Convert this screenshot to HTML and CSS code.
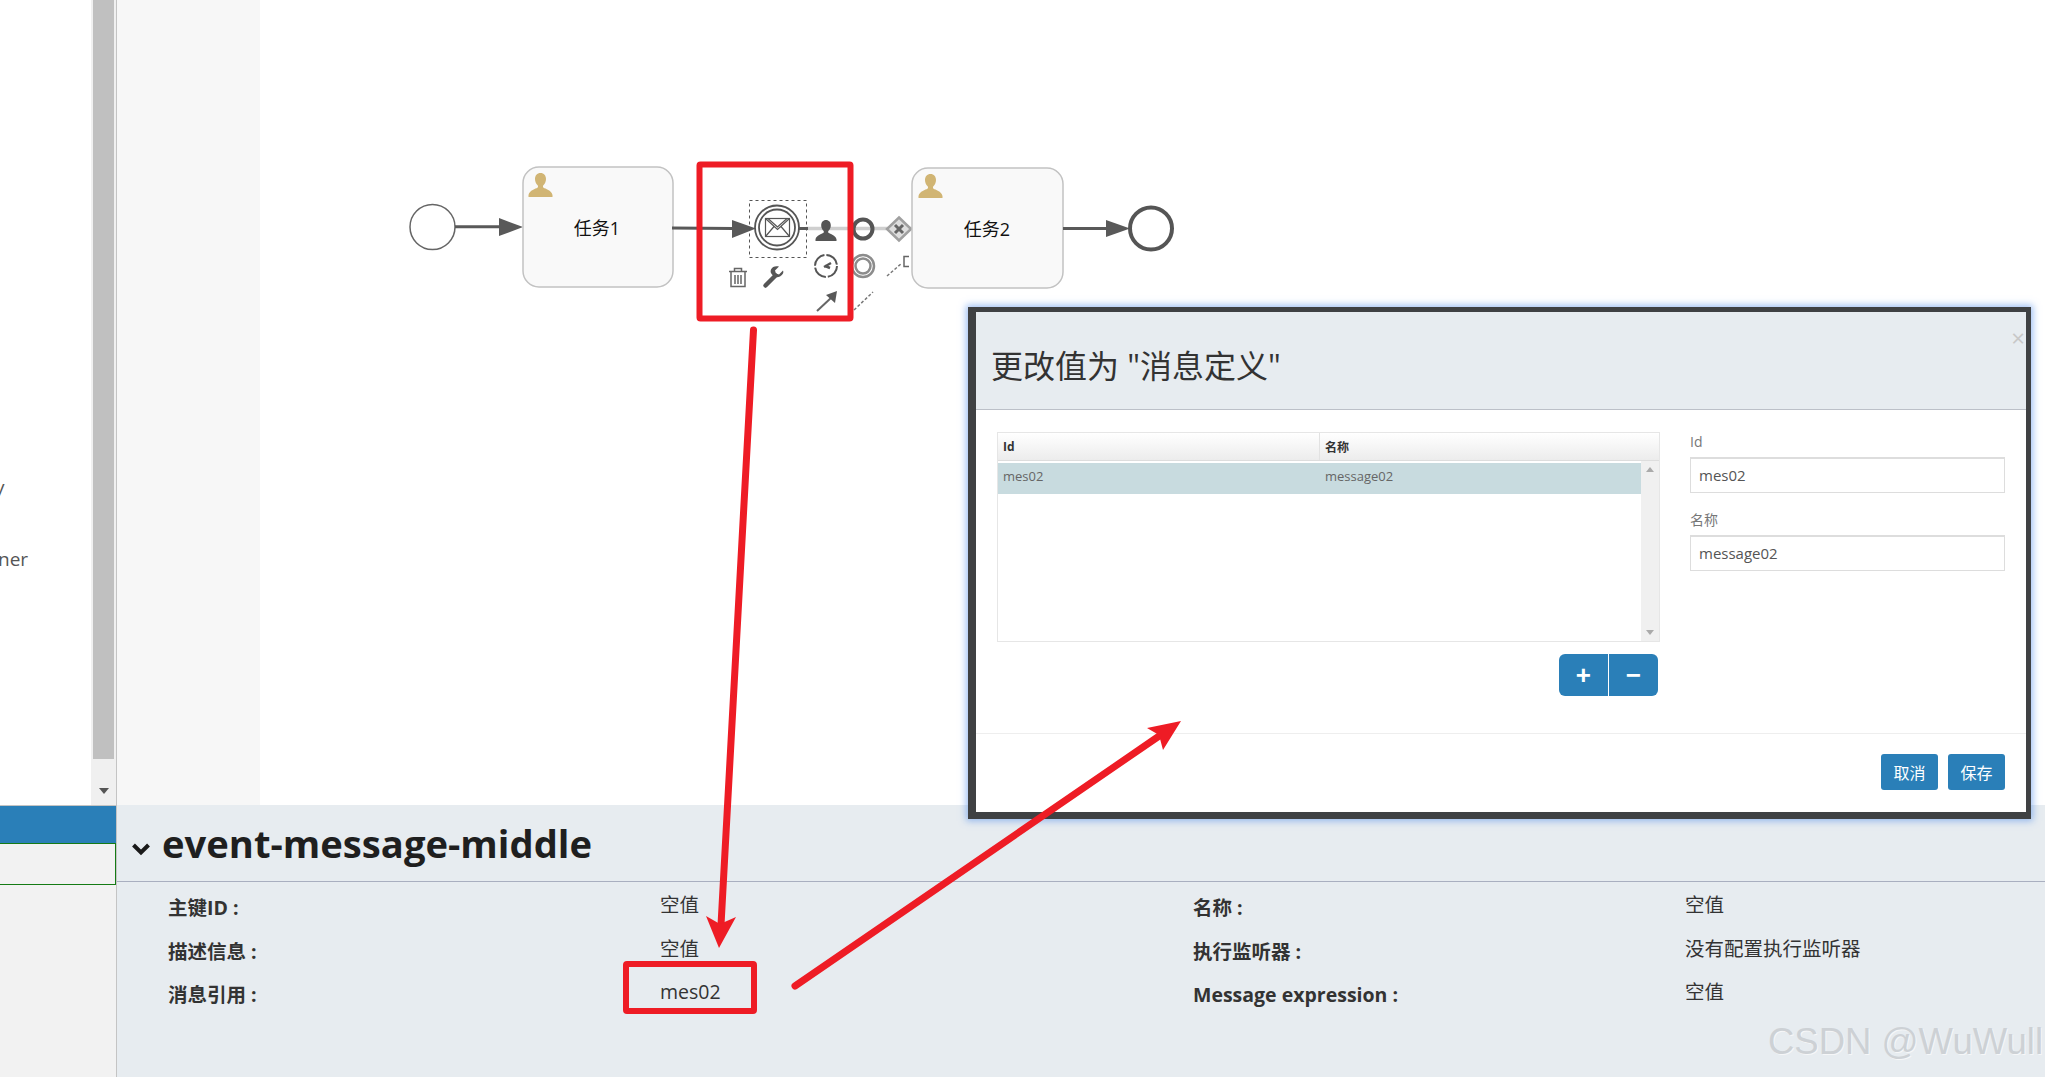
FILE: index.html
```html
<!DOCTYPE html>
<html lang="zh">
<head>
  <meta charset="UTF-8" />
  <title>event-message-middle</title>
  <link rel="stylesheet" href="styles.css">
</head>
<body>
  <aside class="sidebar">
    <div class="palette">
      <div class="palette-list">
        <div class="palette-item cut-y">y</div>
        <div class="palette-item cut-ner">ner</div>
      </div>
      <div class="scrollbar">
        <div class="thumb"></div>
        <div class="arrow-down"></div>
      </div>
    </div>
    <div class="side-blue"></div>
    <div class="side-green"></div>
  </aside>

  <main class="main">
    <div class="canvas">
      <div class="gutter"></div>
      <div class="paper">
        <svg class="diagram" width="1785" height="805" viewBox="260 0 1785 805">
          <defs>
            <symbol id="user" viewBox="0 0 24 24">
              <path d="M12 0c3.4 0 5.5 2.6 5.5 6 0 2.6-1 4.8-2.6 6.2-.6.6-.6 2 .2 2.6 1.6 1 7.9 2.4 8.9 7.2v2H0v-2c1-4.8 7.3-6.2 8.9-7.2.8-.6.8-2 .2-2.6C7.5 10.8 6.5 8.6 6.5 6 6.5 2.6 8.6 0 12 0z"/>
            </symbol>
          </defs>

          <!-- flow -->
          <line class="flow-faint" x1="806" y1="228.5" x2="913" y2="228.5"/>
          <circle class="start" cx="432.5" cy="227" r="22.5"/>
          <line class="flow" x1="455" y1="226.7" x2="500" y2="226.7"/>
          <polygon class="head" points="499,218 523,227 499,236"/>

          <rect class="task" x="523" y="167" width="150" height="120" rx="16"/>
          <use class="user-task" href="#user" x="528" y="173" width="25" height="24"/>
          <text class="task-text" x="597" y="235">任务1</text>

          <line class="flow" x1="672" y1="228" x2="733" y2="228.5"/>
          <polygon class="head" points="732,220 756,228.5 732,238"/>

          <!-- selected intermediate event -->
          <rect class="select" x="749.5" y="200.5" width="57" height="57"/>
          <line class="flow" x1="798" y1="228.5" x2="808" y2="228.5"/>
          <circle class="event" cx="777" cy="227.5" r="22"/>
          <circle class="event" cx="777" cy="227.5" r="18"/>
          <g class="mail">
            <rect x="765.5" y="218.5" width="24" height="18"/>
            <path d="M765.5 218.5l12 11 12-11M768 218.5l9.500 8.500 9.500-8.500M765.500 236.500l8.500-10M789.500 236.500l-8.500-10"/>
          </g>

          <!-- context pad -->
          <use class="pad-user" href="#user" x="815" y="220" width="22" height="21"/>
          <circle class="pad-ring" cx="863" cy="229" r="9.500"/>
          <polygon class="pad-gate" points="899,217.500 911,229 899,240.500 887,229"/>
          <path class="pad-x" d="M895 225l8 8M903 225l-8 8"/>
          <path class="pad-assoc" d="M887 276l15-13"/>
          <path class="pad-bracket" d="M909 256.500h-5v10h5"/>
          <circle class="pad-timer" cx="826" cy="266" r="11"/>
          <path class="pad-hand" d="M824 267l7-4M825 266l5 2"/>
          <circle class="pad-double" cx="863" cy="266" r="11"/>
          <circle class="pad-double" cx="863" cy="266" r="7.500"/>
          <g class="pad-trash">
            <path d="M729 271.500h18M734.500 271v-2.500h7v2.500M731 272v14.500h14v-14.500M735 275v9M738 275v9M741 275v9"/>
          </g>
          <path class="pad-wrench-shaft" d="M765.500 285.500l10-10"/>
          <path class="pad-wrench" d="M783 270.500l-4 4-3-1-1-3 4-4c-3-1-7 0-8 3-1 2 0 4 1 5l2 2c2 1 4 1 6 0 3-2 4-4 3-6z"/>
          <path class="pad-arrow" d="M817 311l15-14"/>
          <polygon class="head" points="837,291 835,303 826,295"/>
          <path class="pad-assoc" d="M854 310l19-18"/>

          <rect class="task" x="912" y="168" width="151" height="120" rx="16"/>
          <use class="user-task" href="#user" x="918" y="174" width="25" height="24"/>
          <text class="task-text" x="987" y="235.500">任务2</text>

          <line class="flow" x1="1063" y1="228.500" x2="1107" y2="228.500"/>
          <polygon class="head" points="1106,220 1130,228.500 1106,237"/>
          <circle class="end" cx="1151" cy="228.500" r="21"/>
        </svg>
      </div>
    </div>

    <section class="details">
      <header class="details-head">
        <svg class="chevron" width="18" height="14" viewBox="0 0 18 14"><path d="M1.500 3l7.500 7.500L16.500 3"/></svg>
        <h2 class="details-title">event-message-middle</h2>
      </header>
      <div class="props">
        <div class="prop-label">主键ID :</div><div class="prop-value">空值</div>
        <div class="prop-label">名称 :</div><div class="prop-value">空值</div>
        <div class="prop-label">描述信息 :</div><div class="prop-value">空值</div>
        <div class="prop-label">执行监听器 :</div><div class="prop-value">没有配置执行监听器</div>
        <div class="prop-label">消息引用 :</div><div class="prop-value">mes02</div>
        <div class="prop-label">Message expression :</div><div class="prop-value">空值</div>
      </div>
    </section>
  </main>

  <div class="modal">
    <div class="modal-head">
      <h3 class="modal-title">更改值为 "消息定义"</h3>
      <span class="modal-close">×</span>
    </div>
    <div class="modal-body">
      <div class="grid-col">
        <div class="grid">
          <div class="grid-head">
            <div class="cell-id">Id</div>
            <div class="cell-name">名称</div>
          </div>
          <div class="grid-rows">
            <div class="grid-list">
              <div class="grid-row">
                <div class="cell-id">mes02</div>
                <div class="cell-name">message02</div>
              </div>
            </div>
            <div class="grid-scroll">
              <div class="tri-up"></div>
              <div class="tri-down"></div>
            </div>
          </div>
        </div>
        <div class="btn-group">
          <button class="btn-add">+</button>
          <button class="btn-add">−</button>
        </div>
      </div>
      <div class="form">
        <label class="form-label">Id</label>
        <input class="form-input" type="text" value="mes02">
        <label class="form-label">名称</label>
        <input class="form-input" type="text" value="message02">
      </div>
    </div>
    <div class="modal-foot">
      <button class="btn">取消</button>
      <button class="btn">保存</button>
    </div>
  </div>

  <!-- red annotations drawn on top of the screenshot -->
  <svg class="notes" width="2045" height="1077" viewBox="0 0 2045 1077">
    <rect x="699.500" y="164.500" width="151" height="154" rx="1"/>
    <rect x="626" y="964" width="128" height="47" rx="1"/>
    <line x1="753.500" y1="330" x2="721" y2="925"/>
    <polygon points="719,948 706,916 720,924 736,917"/>
    <line x1="795" y1="986" x2="1165" y2="732"/>
    <polygon points="1181,721 1147,728 1159,735 1163,750"/>
  </svg>

  <div class="watermark">CSDN @WuWull</div>
</body>
</html>
```
FILE: styles.css
```css
html, body {
  margin: 0;
  padding: 0;
  height: 100%;
}
body {
  display: flex;
  position: relative;
  overflow: hidden;
  font-family: "Open Sans", "Noto Sans CJK SC", sans-serif;
  color: #333;
  background: #fff;
}

/* left palette */
.sidebar {
  width: 116px;
  flex: none;
  display: flex;
  flex-direction: column;
  border-right: 1px solid #c4c4c4;
  background: #f2f2f2;
}
.palette {
  height: 806px;
  flex: none;
  display: flex;
  background: #fff;
  border-bottom: 1px solid #c4c4c4;
  box-sizing: border-box;
}
.palette-list {
  flex: 1;
  overflow: hidden;
  padding-top: 473px;
  font-size: 19px;
  color: #555;
}
.palette-item {
  height: 28px;
  line-height: 28px;
}
.cut-y {
  margin-left: -5px;
  margin-bottom: 44px;
}
.cut-ner {
  margin-left: -2px;
}
.scrollbar {
  width: 25px;
  flex: none;
  display: flex;
  flex-direction: column;
  align-items: center;
  justify-content: space-between;
  background: #f0f0f0;
}
.thumb {
  width: 21px;
  height: 759px;
  background: #c0c0c0;
}
.arrow-down {
  border-left: 5px solid transparent;
  border-right: 5px solid transparent;
  border-top: 6px solid #555;
  margin-bottom: 11px;
}
.side-blue {
  height: 37px;
  background: #2a7fb8;
}
.side-green {
  height: 42px;
  box-sizing: border-box;
  background: #f2f2f2;
  border: 1px solid #157b15;
  border-left: none;
}

/* main column */
.main {
  flex: 1;
  min-width: 0;
  display: flex;
  flex-direction: column;
}
.canvas {
  height: 805px;
  flex: none;
  display: flex;
}
.gutter {
  width: 143px;
  flex: none;
  background: #f7f7f7;
}
.paper {
  flex: 1;
  background: #fff;
  min-width: 0;
}
.diagram {
  display: block;
}
.flow { stroke: #595959; stroke-width: 3; }
.flow-faint { stroke: #cfcfcf; stroke-width: 3.5; }
.head { fill: #595959; }
.start { fill: #fff; stroke: #666; stroke-width: 1.5; }
.end { fill: #fff; stroke: #555; stroke-width: 4; }
.task { fill: #f9f9f9; stroke: #c2c2c2; stroke-width: 1.5; }
.user-task { fill: #d1b574; }
.task-text {
  font-size: 18px;
  text-anchor: middle;
  fill: #111;
}
.select {
  fill: none;
  stroke: #555;
  stroke-width: 1;
  stroke-dasharray: 3 3;
}
.event { fill: #fff; stroke: #555; stroke-width: 1.8; }
.mail { fill: none; stroke: #555; stroke-width: 1.2; }
.pad-user { fill: #555; }
.pad-ring { fill: none; stroke: #555; stroke-width: 4; }
.pad-gate { fill: #dedede; stroke: #a0a0a0; stroke-width: 2.5; }
.pad-x { fill: none; stroke: #666; stroke-width: 3; }
.pad-assoc { fill: none; stroke: #777; stroke-width: 1.5; stroke-dasharray: 3 2; }
.pad-bracket { fill: none; stroke: #666; stroke-width: 1.5; }
.pad-timer { fill: none; stroke: #555; stroke-width: 2; stroke-dasharray: 15.300 2; }
.pad-hand { fill: none; stroke: #555; stroke-width: 2.500; }
.pad-double { fill: none; stroke: #8c8c8c; stroke-width: 2.500; }
.pad-trash { fill: none; stroke: #666; stroke-width: 1.5; }
.pad-wrench { fill: #555; }
.pad-wrench-shaft { fill: none; stroke: #555; stroke-width: 4.500; stroke-linecap: round; }
.pad-arrow { fill: none; stroke: #666; stroke-width: 2; }

/* property panel */
.details {
  flex: 1;
  background: #e7ecf0;
}
.details-head {
  height: 77px;
  box-sizing: border-box;
  display: flex;
  align-items: center;
  gap: 12px;
  padding-left: 15px;
  border-bottom: 1px solid #a9afc0;
}
.chevron {
  margin-top: 12px;
}
.chevron path {
  fill: none;
  stroke: #1a1a1a;
  stroke-width: 4;
}
.details-title {
  margin: 0;
  font-size: 38.200px;
  font-weight: 700;
  line-height: 1;
  color: #1f1f1f;
}
.props {
  display: grid;
  grid-template-columns: 492px 533px 492px 1fr;
  grid-auto-rows: 43.500px;
  padding: 3px 0 0 51px;
  font-size: 19.500px;
}
.prop-label {
  font-weight: 700;
  line-height: 45px;
}
.prop-value {
  line-height: 39px;
}

/* modal */
.modal {
  position: absolute;
  left: 968px;
  top: 307px;
  width: 1063px;
  height: 512px;
  box-sizing: border-box;
  display: flex;
  flex-direction: column;
  background: #fff;
  border-style: solid;
  border-color: #3f4143;
  border-width: 5px 5px 7px 8px;
  box-shadow: 0 0 7px 2px rgba(80, 140, 235, 0.55);
}
.modal-head {
  position: relative;
  height: 98px;
  flex: none;
  box-sizing: border-box;
  display: flex;
  align-items: center;
  padding: 7px 0 0 15px;
  background: #e7ecf0;
  border-bottom: 1px solid #bcc0c8;
}
.modal-title {
  margin: 0;
  font-size: 32px;
  font-weight: 400;
  color: #333;
}
.modal-close {
  position: absolute;
  right: 1px;
  top: 11px;
  font-size: 24px;
  line-height: 30px;
  color: #c8c8c8;
}
.modal-body {
  flex: 1;
  display: flex;
  gap: 30px;
  padding: 22px 21px 0 21px;
}
.grid-col {
  width: 663px;
  flex: none;
}
.grid {
  height: 210px;
  box-sizing: border-box;
  display: flex;
  flex-direction: column;
  border: 1px solid #e6e6e6;
  font-size: 13px;
}
.grid-head {
  height: 28px;
  flex: none;
  box-sizing: border-box;
  display: flex;
  align-items: center;
  background: linear-gradient(to bottom, #fff, #ececec);
  border-bottom: 1px solid #ddd;
  font-weight: 700;
  font-size: 12px;
}
.cell-id {
  width: 322px;
  flex: none;
  box-sizing: border-box;
  padding-left: 5px;
}
.cell-name {
  padding-left: 5px;
}
.grid-head .cell-id {
  height: 100%;
  display: flex;
  align-items: center;
  border-right: 1px solid #e2e2e2;
}
.grid-rows {
  flex: 1;
  display: flex;
  min-height: 0;
}
.grid-list {
  flex: 1;
  padding-top: 2px;
}
.grid-row {
  height: 31px;
  box-sizing: border-box;
  padding-bottom: 5px;
  display: flex;
  align-items: center;
  background: #c8dbdf;
  color: #666;
}
.grid-scroll {
  width: 18px;
  flex: none;
  display: flex;
  flex-direction: column;
  align-items: center;
  justify-content: space-between;
  padding: 6px 0;
  box-sizing: border-box;
  background: #f0f0f0;
}
.tri-up {
  border-left: 4px solid transparent;
  border-right: 4px solid transparent;
  border-bottom: 5px solid #aaa;
}
.tri-down {
  border-left: 4px solid transparent;
  border-right: 4px solid transparent;
  border-top: 5px solid #aaa;
}
.btn-group {
  display: flex;
  justify-content: flex-end;
  margin: 12px 2px 0 0;
}
.btn-add {
  width: 49.500px;
  height: 42px;
  padding: 0;
  border: none;
  background: #2a7fb8;
  color: #fff;
  font-family: "Liberation Sans", sans-serif;
  font-size: 26px;
  font-weight: 700;
  line-height: 38px;
}
.btn-add:first-child {
  border-radius: 6px 0 0 6px;
  border-right: 1px solid #fff;
}
.btn-add:last-child {
  border-radius: 0 6px 6px 0;
}
.form {
  width: 315px;
  flex: none;
  display: flex;
  flex-direction: column;
}
.form-label {
  height: 20px;
  line-height: 20px;
  margin-bottom: 5px;
  font-size: 14px;
  color: #777;
}
.form-input {
  height: 36px;
  box-sizing: border-box;
  margin-bottom: 17px;
  padding: 0 8px 2px;
  border: 1px solid #ddd;
  border-top-width: 2px;
  font-family: inherit;
  font-size: 15px;
  color: #555;
  outline: none;
}
.modal-foot {
  height: 79px;
  flex: none;
  box-sizing: border-box;
  display: flex;
  justify-content: flex-end;
  gap: 10px;
  padding: 20px 21px 0 0;
  border-top: 1px solid #eee;
}
.btn {
  width: 57px;
  height: 36px;
  padding: 0;
  border: none;
  border-radius: 3px;
  background: #2a7fb8;
  color: #fff;
  font-family: inherit;
  font-size: 16px;
}

/* annotations */
.notes {
  position: absolute;
  left: 0;
  top: 0;
  pointer-events: none;
}
.notes rect {
  fill: none;
  stroke: #ee1c25;
  stroke-width: 6;
}
.notes line {
  stroke: #ee1c25;
  stroke-width: 7;
  stroke-linecap: round;
}
.notes polygon {
  fill: #ee1c25;
}
.watermark {
  position: absolute;
  right: 2px;
  bottom: 15px;
  font-family: "Liberation Sans", sans-serif;
  font-size: 36.500px;
  line-height: 40px;
  color: #cdd1d5;
  text-shadow: 1px 1px 0 #f6f7f8;
  white-space: nowrap;
}
```
